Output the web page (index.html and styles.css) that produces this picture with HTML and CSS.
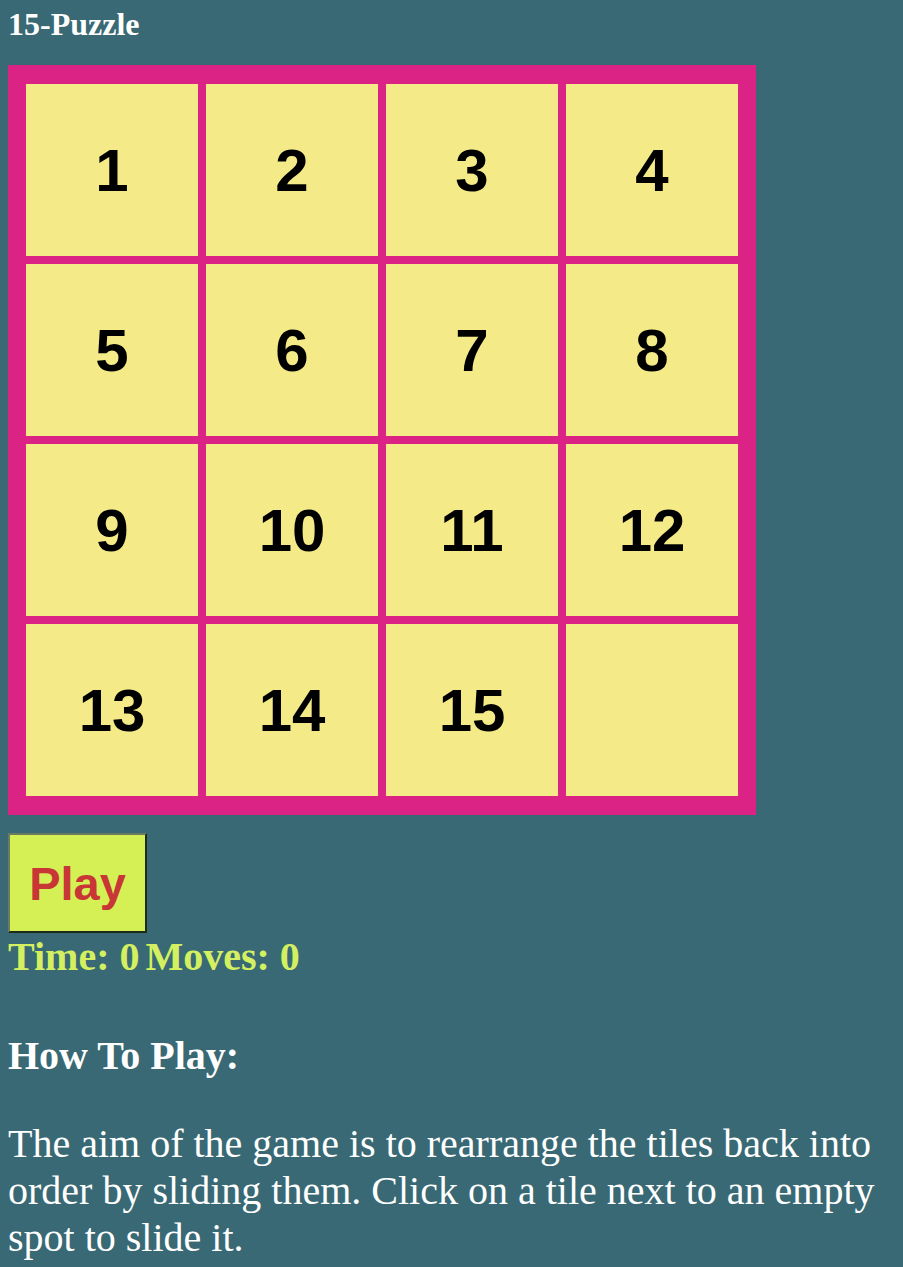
FILE: index.html
```html
<!DOCTYPE html>
<html lang="en">
<head>
<meta charset="utf-8">
<title>15-Puzzle</title>
<link rel="stylesheet" href="styles.css">
</head>
<body>
<h1 class="title">15-Puzzle</h1>
<div class="board">
  <div class="tile">1</div>
  <div class="tile">2</div>
  <div class="tile">3</div>
  <div class="tile">4</div>
  <div class="tile">5</div>
  <div class="tile">6</div>
  <div class="tile">7</div>
  <div class="tile">8</div>
  <div class="tile">9</div>
  <div class="tile">10</div>
  <div class="tile">11</div>
  <div class="tile">12</div>
  <div class="tile">13</div>
  <div class="tile">14</div>
  <div class="tile">15</div>
  <div class="tile empty"></div>
</div>
<button class="play-btn">Play</button>
<div class="stats"><span class="stat">Time: 0</span><span class="stat">Moves: 0</span></div>
<h2 class="howto">How To Play:</h2>
<p class="desc">The aim of the game is to rearrange the tiles back into order by sliding them. Click on a tile next to an empty spot to slide it.</p>
</body>
</html>
```
FILE: styles.css
```css
body {
  margin: 8px;
  background: #386974;
  color: #ffffff;
  font-family: "Liberation Serif", "Times New Roman", serif;
}
.title {
  font-size: 32px;
  font-weight: bold;
  margin: -2px 0 22px;
  line-height: normal;
}
.board {
  display: grid;
  grid-template-columns: repeat(4, 172px);
  grid-auto-rows: 172px;
  gap: 8px;
  padding: 19px 18px;
  background: #da2384;
  width: fit-content;
}
.tile {
  background: #f4eb88;
  display: flex;
  align-items: center;
  justify-content: center;
  font-family: "Liberation Sans", Arial, sans-serif;
  font-weight: bold;
  font-size: 60px;
  color: #000;
}
.play-btn {
  display: block;
  margin-top: 18px;
  width: 139px;
  height: 100px;
  padding: 0;
  background: #d4f055;
  border: 2px solid;
  border-color: #6b7a60 #1e2a18 #1e2a18 #6b7a60;
  color: #c83636;
  font-family: "Liberation Sans", Arial, sans-serif;
  font-weight: bold;
  font-size: 47px;
}
.stats {
  display: flex;
  gap: 6px;
  color: #d4f060;
  font-weight: bold;
  font-size: 40px;
}
.howto {
  font-size: 40px;
  margin: 52px 0 0;
}
.desc {
  font-size: 40px;
  line-height: 47px;
  margin: 41px 0 0;
}
```
